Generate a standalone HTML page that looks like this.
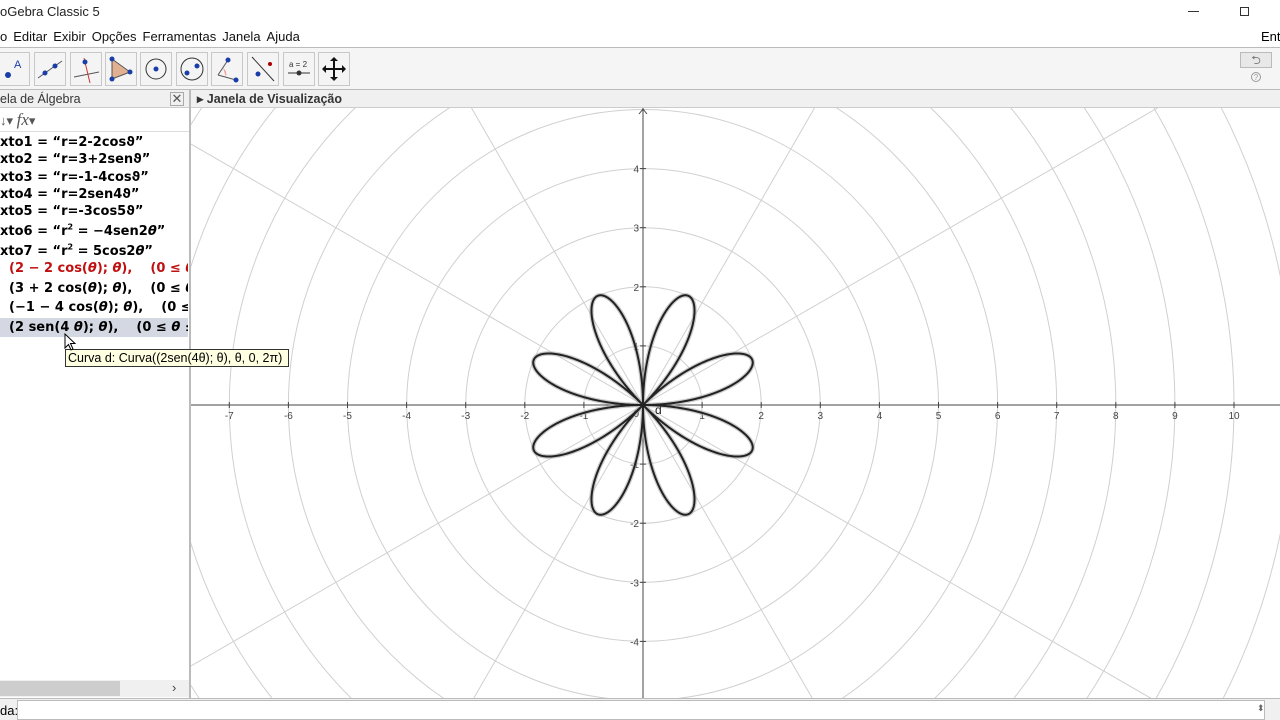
<!DOCTYPE html>
<html style="overflow:hidden;width:1280px;height:720px"><head><meta charset="utf-8"><style>
*{margin:0;padding:0;box-sizing:border-box}
body{width:1280px;height:720px;overflow:hidden;background:#fff;font-family:"Liberation Sans",sans-serif;position:relative}
.abs{position:absolute}
.menu span{margin-right:6px}
.tb{position:absolute;top:52px;width:32px;height:34px;border:1px solid #c8c8c8;background:#f4f4f4}
.tb svg{width:30px;height:32px}
.row{position:absolute;left:0;width:188px;height:19px;font-family:"DejaVu Sans",sans-serif;font-weight:bold;font-size:13px;white-space:nowrap;overflow:hidden;line-height:19px}
sup{line-height:0}
</style></head><body>
<div class="abs" style="left:0;top:4px;font-size:13px;color:#222">oGebra Classic 5</div>
<div class="abs" style="left:1188px;top:11px;width:11px;height:1px;background:#333"></div>
<div class="abs" style="left:1240px;top:7px;width:9px;height:9px;border:1px solid #333"></div>
<div class="abs menu" style="left:0;top:29px;font-size:13px;color:#111"><span>o</span><span>Editar</span><span>Exibir</span><span>Opções</span><span>Ferramentas</span><span>Janela</span><span>Ajuda</span></div>
<div class="abs" style="left:1261px;top:29px;font-size:13px">Ent</div>
<div class="abs" style="left:0;top:47px;width:1280px;height:43px;background:#f5f5f5;border-top:1px solid #bbb;border-bottom:1px solid #bbb"></div>
<div class="tb" style="left:-2px"><svg viewBox="0 0 30 32"><circle cx="9" cy="22" r="3" fill="#1a3ea8"/><text x="15" y="15" font-size="11" fill="#1a3ea8" font-family="Liberation Sans">A</text></svg></div>
<div class="tb" style="left:34px"><svg viewBox="0 0 30 32"><line x1="3" y1="25" x2="27" y2="8" stroke="#555"/><circle cx="10" cy="20" r="2.5" fill="#1a3ea8"/><circle cx="20" cy="13" r="2.5" fill="#1a3ea8"/></svg></div>
<div class="tb" style="left:70px"><svg viewBox="0 0 30 32"><line x1="3" y1="24" x2="28" y2="19" stroke="#555"/><line x1="13" y1="5" x2="19" y2="30" stroke="#c33"/><circle cx="14" cy="9" r="2.5" fill="#1a3ea8"/></svg></div>
<div class="tb" style="left:105px"><svg viewBox="0 0 30 32"><polygon points="6,6 24,19 6,26" fill="#e0b090" stroke="#555"/><circle cx="6" cy="6" r="2.5" fill="#1a3ea8"/><circle cx="24" cy="19" r="2.5" fill="#1a3ea8"/><circle cx="6" cy="26" r="2.5" fill="#1a3ea8"/></svg></div>
<div class="tb" style="left:140px"><svg viewBox="0 0 30 32"><circle cx="15" cy="16" r="10" fill="none" stroke="#333"/><circle cx="15" cy="16" r="2.5" fill="#1a3ea8"/></svg></div>
<div class="tb" style="left:176px"><svg viewBox="0 0 30 32"><circle cx="15" cy="16" r="11" fill="none" stroke="#333"/><circle cx="10" cy="20" r="2.5" fill="#1a3ea8"/><circle cx="20" cy="13" r="2.5" fill="#1a3ea8"/></svg></div>
<div class="tb" style="left:211px"><svg viewBox="0 0 30 32"><line x1="6" y1="22" x2="16" y2="7" stroke="#555"/><line x1="6" y1="22" x2="24" y2="27" stroke="#555"/><path d="M11 15 A8 8 0 0 1 14 24 Z" fill="#f0a0a0"/><circle cx="16" cy="7" r="2.5" fill="#1a3ea8"/><circle cx="24" cy="27" r="2.5" fill="#1a3ea8"/></svg></div>
<div class="tb" style="left:247px"><svg viewBox="0 0 30 32"><line x1="4" y1="4" x2="26" y2="28" stroke="#333"/><circle cx="22" cy="11" r="2" fill="#a00"/><circle cx="10" cy="21" r="2.5" fill="#1a3ea8"/></svg></div>
<div class="tb" style="left:283px"><svg viewBox="0 0 30 32"><text x="5" y="14" font-size="8" fill="#333" font-family="Liberation Sans">a = 2</text><line x1="4" y1="20" x2="26" y2="20" stroke="#333"/><circle cx="15" cy="20" r="2.5" fill="#333"/></svg></div>
<div class="tb" style="left:318px"><svg viewBox="0 0 30 32"><path d="M15 6V26M5 16H25" stroke="#111" stroke-width="2"/><path d="M15 4l-4 4h8zM15 28l-4-4h8zM3 16l4-4v8zM27 16l-4-4v8z" fill="#111"/></svg></div>
<div class="abs" style="left:1240px;top:52px;width:32px;height:16px;border:1px solid #bbb;background:#e8e8e8;font-size:12px;text-align:center;color:#777;line-height:14px">⮌</div>
<div class="abs" style="left:1251px;top:72px;width:10px;height:10px;border:1px solid #999;border-radius:50%;font-size:8px;text-align:center;color:#999;line-height:9px">?</div>
<div class="abs" style="left:0;top:90px;width:190px;height:18px;background:#f0f0f0;border-bottom:1px solid #ccc;font-size:12.5px;line-height:18px;color:#333">ela de Álgebra</div>
<div class="abs" style="left:170px;top:92px;width:14px;height:14px;border:1px solid #aaa;font-size:13px;line-height:11px;text-align:center;color:#555">✕</div>
<div class="abs" style="left:0;top:110px;font-size:13px;color:#555">↓▾ <i style="font-family:'Liberation Serif',serif;font-size:17px">fx</i>▾</div>
<div class="abs" style="left:0;top:131px;width:190px;height:1px;background:#ddd"></div>
<div class="abs" style="left:189px;top:90px;width:2px;height:608px;background:#bbb"></div>
<div class="row" style="top:133px">xto1 = “r=2-2cosϑ”</div>
<div class="row" style="top:150px">xto2 = “r=3+2senϑ”</div>
<div class="row" style="top:168px">xto3 = “r=-1-4cosϑ”</div>
<div class="row" style="top:185px">xto4 = “r=2sen4ϑ”</div>
<div class="row" style="top:202px">xto5 = “r=-3cos5ϑ”</div>
<div class="row" style="top:222px">xto6 = “r<sup style="font-size:8px">2</sup> = −4sen2<i>θ</i>”</div>
<div class="row" style="top:242px">xto7 = “r<sup style="font-size:8px">2</sup> = 5cos2<i>θ</i>”</div>
<div class="row" style="top:259px;color:#c01010">&nbsp;&nbsp;(2 − 2 cos(<i>θ</i>); <i>θ</i>),&nbsp;&nbsp;&nbsp; (0 ≤ <i>θ</i></div>
<div class="row" style="top:279px">&nbsp;&nbsp;(3 + 2 cos(<i>θ</i>); <i>θ</i>),&nbsp;&nbsp;&nbsp; (0 ≤ <i>θ</i></div>
<div class="row" style="top:298px">&nbsp;&nbsp;(−1 − 4 cos(<i>θ</i>); <i>θ</i>),&nbsp;&nbsp;&nbsp; (0 ≤</div>
<div class="row" style="top:318px;background:#d4d8e2">&nbsp;&nbsp;(2 sen(4 <i>θ</i>); <i>θ</i>),&nbsp;&nbsp;&nbsp; (0 ≤ <i>θ</i> ≤</div>
<div class="abs" style="left:0;top:680px;width:189px;height:17px;background:#f0f0f0"></div>
<div class="abs" style="left:0;top:681px;width:120px;height:15px;background:#cdcdcd"></div>
<div class="abs" style="left:172px;top:680px;font-size:13px;color:#444">›</div>
<div class="abs" style="left:191px;top:90px;width:1089px;height:18px;background:#f0f0f0;border-bottom:1px solid #ccc;font-size:12.5px;font-weight:bold;line-height:18px;color:#333;padding-left:6px">▸ Janela de Visualização</div>
<svg class="abs" style="left:191px;top:108px;overflow:hidden" width="1089" height="590" id="g"></svg>
<div class="abs" style="left:0;top:698px;width:1280px;height:22px;background:#f0f0f0;border-top:1px solid #bbb"></div>
<div class="abs" style="left:0;top:703px;font-size:13px">da:</div>
<div class="abs" style="left:17px;top:700px;width:1248px;height:20px;background:#fff;border:1px solid #bbb"></div>
<div class="abs" style="left:1257px;top:703px;font-size:9px;color:#666">⬍</div>
<div class="abs" style="left:65px;top:349px;width:224px;height:18px;background:#ffffe1;border:1px solid #333;font-size:12.5px;line-height:16px;padding-left:2px;white-space:nowrap;overflow:hidden">Curva d: Curva((2sen(4θ); θ), θ, 0, 2π)</div>
<svg class="abs" style="left:64px;top:333px" width="14" height="20"><path d="M1 1V15L4.5 11.5L7 17L9 16L6.5 10.5H11Z" fill="#fff" stroke="#000"/></svg>
<script>
var g=document.getElementById('g'),ox=452,oy=297,u=59.1,s='';
for(var k=1;k<20;k++)s+='<circle cx="'+ox+'" cy="'+oy+'" r="'+(k*u)+'" fill="none" stroke="#d0d0d0"/>';
[30,60,120,150].forEach(function(a){var r=a*Math.PI/180,L=1500;s+='<line x1="'+(ox-L*Math.cos(r))+'" y1="'+(oy+L*Math.sin(r))+'" x2="'+(ox+L*Math.cos(r))+'" y2="'+(oy-L*Math.sin(r))+'" stroke="#d0d0d0"/>';});
s+='<line x1="0" y1="'+oy+'" x2="1089" y2="'+oy+'" stroke="#444"/><line x1="'+ox+'" y1="0" x2="'+ox+'" y2="590" stroke="#444"/><path d="M'+(ox-4)+' 6L'+ox+' 1L'+(ox+4)+' 6" fill="none" stroke="#444"/>';
for(var i=-7;i<=10;i++){if(!i)continue;var x=ox+i*u;s+='<line x1="'+x+'" y1="'+(oy-3)+'" x2="'+x+'" y2="'+(oy+3)+'" stroke="#444"/><text x="'+x+'" y="'+(oy+14)+'" font-size="10" fill="#444" text-anchor="middle" font-family="Liberation Sans">'+(i<0?'-'+(-i):i)+'</text>';}
for(var j=-4;j<=4;j++){if(!j)continue;var y=oy-j*u;s+='<line x1="'+(ox-3)+'" y1="'+y+'" x2="'+(ox+3)+'" y2="'+y+'" stroke="#444"/><text x="'+(ox-4)+'" y="'+(y+4)+'" font-size="10" fill="#444" text-anchor="end" font-family="Liberation Sans">'+(j<0?'-'+(-j):j)+'</text>';}
s+='<text x="'+(ox-4)+'" y="'+(oy+12)+'" font-size="10" fill="#444" text-anchor="end" font-family="Liberation Sans">0</text>';
var p='';for(var t=0;t<=2000;t++){var th=t/2000*2*Math.PI,r=2*Math.sin(4*th)*u;p+=(t?'L':'M')+(ox+r*Math.cos(th)).toFixed(2)+' '+(oy-r*Math.sin(th)).toFixed(2);}
s+='<path d="'+p+'" fill="none" stroke="#aaa" stroke-width="4.5" opacity=".6"/><path d="'+p+'" fill="none" stroke="#222" stroke-width="2"/>';
s+='<text x="'+(ox+12)+'" y="'+(oy+9)+'" font-size="12" fill="#222" font-family="Liberation Sans">d</text>';
g.innerHTML=s;
</script>
</body></html>
